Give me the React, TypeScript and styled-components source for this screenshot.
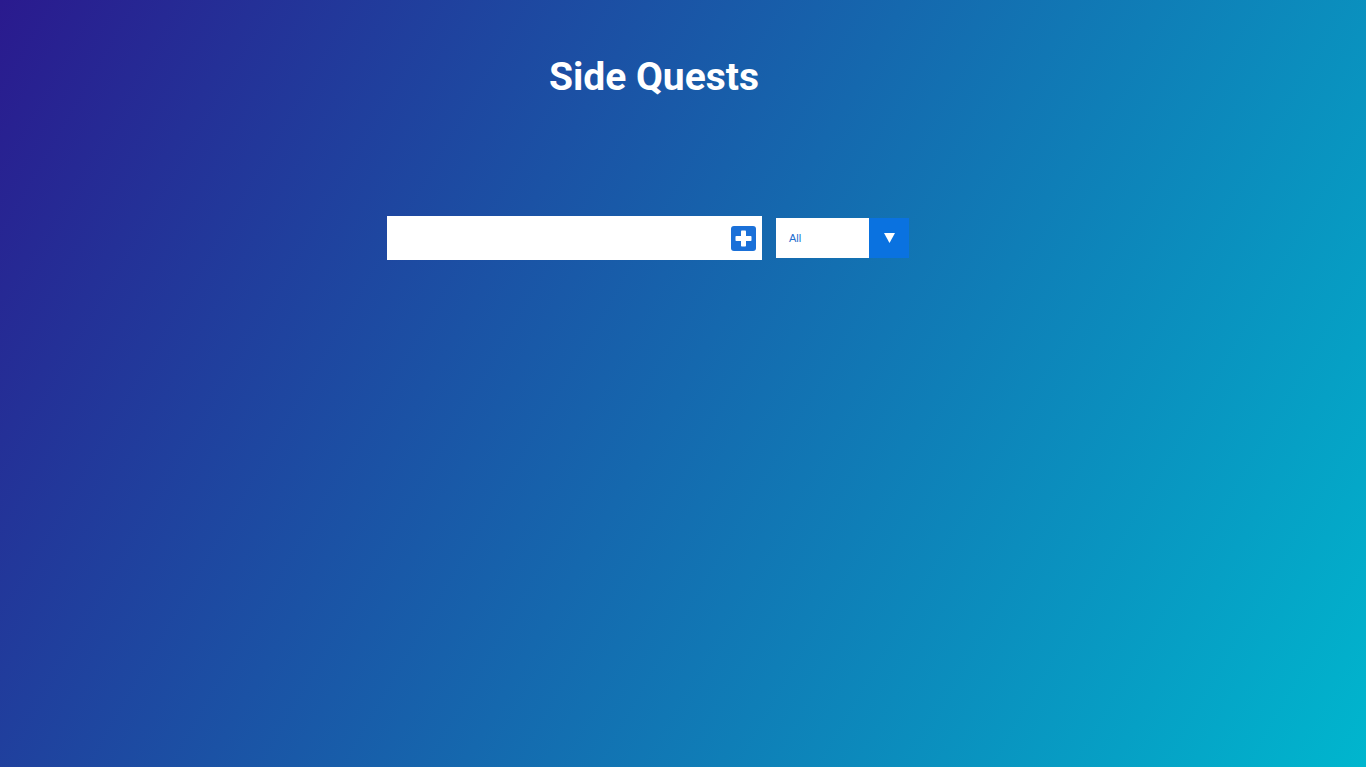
import React from "react";
import styled, { createGlobalStyle } from "styled-components";

const GlobalStyle = createGlobalStyle`
  html, body { margin: 0; padding: 0; }
  body {
    font-family: Roboto, "Liberation Sans", sans-serif;
    min-height: 767px;
    background: linear-gradient(120deg, #2a1a8e 0%, #00b6ce 100%);
    background-attachment: fixed;
  }
`;

const Page = styled.div`
  min-height: 767px;
  display: flex;
  flex-direction: column;
`;

const Container = styled.div`
  margin-left: 387px;
  width: 534px;
  display: flex;
  flex-direction: column;
`;

const Title = styled.h1`
  margin: 54px 0 0;
  font-family: Roboto, "Liberation Sans", sans-serif;
  font-weight: 700;
  font-size: 39px;
  line-height: 47px;
  color: #ffffff;
  text-align: center;
`;

const FormRow = styled.form`
  margin-top: 115px;
  display: flex;
  align-items: center;
  gap: 14px;
`;

const InputBox = styled.div`
  width: 375px;
  height: 44px;
  background: #ffffff;
  display: flex;
  align-items: center;
  box-sizing: border-box;
  padding: 0 6px 0 12px;
`;

const TextInput = styled.input`
  flex: 1;
  border: none;
  outline: none;
  background: transparent;
  font-family: Roboto, "Liberation Sans", sans-serif;
  font-size: 16px;
  height: 100%;
`;

const AddButton = styled.button`
  border: none;
  background: transparent;
  padding: 0;
  width: 25px;
  height: 25px;
  display: flex;
  align-items: center;
  justify-content: center;
  cursor: pointer;
`;

const SelectWrap = styled.div`
  display: flex;
  height: 40px;
`;

const SelectBox = styled.div`
  width: 93px;
  height: 40px;
  background: #ffffff;
  display: flex;
  align-items: center;
  box-sizing: border-box;
  padding-left: 13px;
  font-family: "Liberation Sans", Arial, sans-serif;
  font-size: 11px;
  color: #1f6fd0;
`;

const ArrowBox = styled.div`
  width: 40px;
  height: 40px;
  background: #0a72e0;
  display: flex;
  align-items: center;
  justify-content: center;
`;

export default function App() {
  return (
    <>
      <GlobalStyle />
      <Page>
        <Container>
          <Title>Side Quests</Title>
          <FormRow onSubmit={(e) => e.preventDefault()}>
            <InputBox>
              <TextInput type="text" />
              <AddButton type="submit" aria-label="Add">
                <svg width="25" height="25" viewBox="0 0 25 25">
                  <rect x="0" y="0" width="25" height="25" rx="3" fill="#1a70d8" />
                  <rect x="10" y="4.5" width="5" height="16" rx="0.8" fill="#ffffff" />
                  <rect x="4.5" y="10" width="16" height="5" rx="0.8" fill="#ffffff" />
                </svg>
              </AddButton>
            </InputBox>
            <SelectWrap>
              <SelectBox>All</SelectBox>
              <ArrowBox>
                <svg width="11" height="10" viewBox="0 0 11 10">
                  <polygon points="0,0 11,0 5.5,10" fill="#ffffff" />
                </svg>
              </ArrowBox>
            </SelectWrap>
          </FormRow>
        </Container>
      </Page>
    </>
  );
}
